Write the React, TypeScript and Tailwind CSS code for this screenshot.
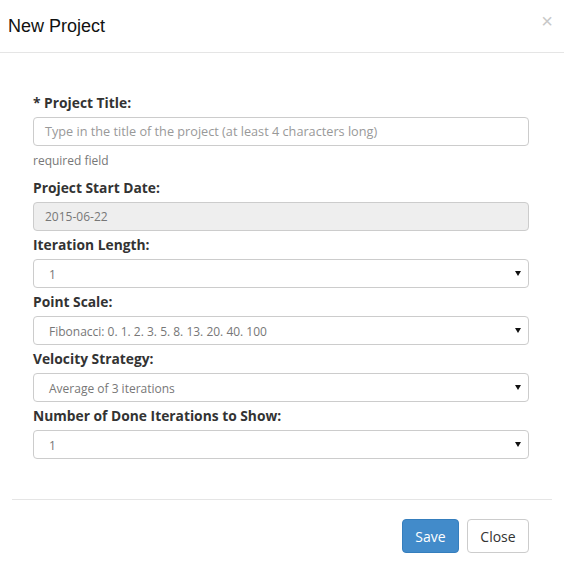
const selects = [
  { label: 'Iteration Length:', value: '1' },
  { label: 'Point Scale:', value: 'Fibonacci: 0. 1. 2. 3. 5. 8. 13. 20. 40. 100' },
  { label: 'Velocity Strategy:', value: 'Average of 3 iterations' },
  { label: 'Number of Done Iterations to Show:', value: '1' },
];

function Label({ children }: { children: React.ReactNode }) {
  return <div className="h-[19px] mb-[5px] text-[13.8px] leading-[19px] font-bold text-[#333]">{children}</div>;
}

function SelectBox({ value }: { value: string }) {
  return (
    <div className="h-[29px] flex items-center justify-between border border-[#ccc] rounded-[4px] bg-white pl-[15px] pr-[7px]">
      <span className="text-[12px] text-[#777] pt-[3px]">{value}</span>
      <svg width="6" height="5" viewBox="0 0 6 5">
        <path d="M0 0h6L3 5z" fill="#111" />
      </svg>
    </div>
  );
}

export default function App() {
  return (
    <div className="w-[564px] h-[583px] bg-white font-['Open_Sans',sans-serif]">
      <div className="h-[53px] border-b border-[#e5e5e5] flex items-center justify-between pl-[8px] pr-[11px]">
        <h4 className="text-[18px] text-[#111] font-['Liberation_Sans',Arial,sans-serif] mt-[0px]">New Project</h4>
        <span className="text-[20px] leading-none text-[#c8c8c8] font-['Liberation_Sans',Arial,sans-serif] mt-[-10px]">×</span>
      </div>

      <div className="pt-[40px] pl-[33px] pr-[35px] pb-[40px]">
        <Label>* Project Title:</Label>
        <div className="h-[29px] flex items-center border border-[#ccc] rounded-[4px] px-[11px]">
          <span className="text-[12.7px] text-[#999] pt-[1px]">Type in the title of the project (at least 4 characters long)</span>
        </div>
        <div className="mt-[6px] h-[17px] text-[12px] leading-[17px] text-[#777]">required field</div>

        <div className="mt-[9px]">
          <Label>Project Start Date:</Label>
          <div className="h-[29px] flex items-center border border-[#ccc] rounded-[4px] bg-[#eee] px-[11px]">
            <span className="text-[12px] text-[#777] pt-[1px]">2015-06-22</span>
          </div>
        </div>

        {selects.map((s) => (
          <div key={s.label} className="mt-[4px]">
            <Label>{s.label}</Label>
            <SelectBox value={s.value} />
          </div>
        ))}
      </div>

      <div className="mx-[12px] border-t border-[#e5e5e5] pt-[19px] pr-[23px] flex justify-end gap-[8px]">
        <button className="h-[34px] w-[57px] rounded-[4px] bg-[#428bca] border border-[#357ebd] text-white text-[14px]">Save</button>
        <button className="h-[34px] w-[62px] rounded-[4px] bg-white border border-[#ccc] text-[#333] text-[14px]">Close</button>
      </div>
    </div>
  );
}
